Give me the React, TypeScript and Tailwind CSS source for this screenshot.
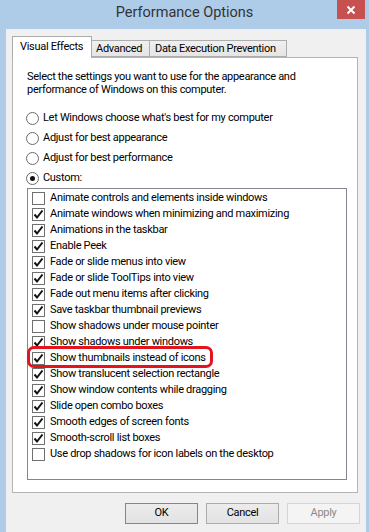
import React from 'react';

type Item = { label: string; checked: boolean };

const items: Item[] = [
  { label: 'Animate controls and elements inside windows', checked: false },
  { label: 'Animate windows when minimizing and maximizing', checked: true },
  { label: 'Animations in the taskbar', checked: true },
  { label: 'Enable Peek', checked: true },
  { label: 'Fade or slide menus into view', checked: true },
  { label: 'Fade or slide ToolTips into view', checked: true },
  { label: 'Fade out menu items after clicking', checked: true },
  { label: 'Save taskbar thumbnail previews', checked: true },
  { label: 'Show shadows under mouse pointer', checked: false },
  { label: 'Show shadows under windows', checked: true },
  { label: 'Show thumbnails instead of icons', checked: true },
  { label: 'Show translucent selection rectangle', checked: true },
  { label: 'Show window contents while dragging', checked: true },
  { label: 'Slide open combo boxes', checked: true },
  { label: 'Smooth edges of screen fonts', checked: true },
  { label: 'Smooth-scroll list boxes', checked: true },
  { label: 'Use drop shadows for icon labels on the desktop', checked: false },
];

const radios = [
  { label: "Let Windows choose what's best for my computer", on: false },
  { label: 'Adjust for best appearance', on: false },
  { label: 'Adjust for best performance', on: false },
  { label: 'Custom:', on: true },
];

const CheckBox: React.FC<{ checked: boolean }> = ({ checked }) => (
  <span className="w-[13px] h-[13px] border border-[#707070] bg-white flex items-center justify-center shrink-0">
    {checked && (
      <svg width="11" height="11" viewBox="0 0 11 11">
        <path d="M1.5 5.5 L4 8.5 L9.5 1.5" fill="none" stroke="#111" strokeWidth="2" />
      </svg>
    )}
  </span>
);

const Radio: React.FC<{ on: boolean }> = ({ on }) => (
  <span className="w-[13px] h-[13px] rounded-full border border-[#6a6a6a] bg-white flex items-center justify-center shrink-0">
    {on && <span className="w-[5px] h-[5px] rounded-full bg-[#111]" />}
  </span>
);

const App: React.FC = () => {
  return (
    <div
      className="relative w-[369px] h-[532px] bg-[#aecbe8] overflow-hidden text-[11px] tracking-[-0.3px] text-black"
      style={{ fontFamily: 'Roboto, "Noto Sans", sans-serif' }}
    >
      {/* title bar */}
      <div className="h-[29px] flex items-center justify-center text-[14.5px] tracking-normal text-[#333] pb-[3px]">
        Performance Options
      </div>
      <div className="absolute top-0 right-[4px] w-[28px] h-[19px] bg-[#c75050] flex items-center justify-center">
        <svg width="10" height="10" viewBox="0 0 10 10">
          <path d="M1.5 1.5 L8.5 8.5 M8.5 1.5 L1.5 8.5" stroke="#fff" strokeWidth="2" />
        </svg>
      </div>

      {/* window body */}
      <div className="ml-[6px] w-[360px] h-[503px] bg-[#f0f0f0] pl-[6px] pt-[7px]">
        {/* tabs */}
        <div className="flex items-end h-[21px] leading-none whitespace-nowrap">
          <div className="relative z-10 w-[80px] h-[22px] -mb-px bg-white border border-b-0 border-[#acacac] flex items-center pl-[7px] pb-[2px]">
            Visual Effects
          </div>
          <div className="w-[58px] h-[17px] bg-gradient-to-b from-[#f0f0f0] to-[#e5e5e5] border border-l-0 border-[#acacac] flex items-center pl-[4px]">
            Advanced
          </div>
          <div className="w-[137px] h-[17px] bg-gradient-to-b from-[#f0f0f0] to-[#e5e5e5] border border-l-0 border-[#acacac] flex items-center pl-[5px]">
            Data Execution Prevention
          </div>
        </div>

        {/* tab panel */}
        <div className="w-[346px] h-[436px] bg-white border border-[#b4b4b4] pl-[13px]">
          <p className="mt-[12px] pl-px leading-[13px] whitespace-nowrap">
            Select the settings you want to use for the appearance and
            <br />
            performance of Windows on this computer.
          </p>

          <div className="mt-[12px]">
            {radios.map((r) => (
              <div key={r.label} className="h-[20px] flex items-center gap-[4px]">
                <Radio on={r.on} />
                <span>{r.label}</span>
              </div>
            ))}
          </div>

          <div className="ml-px w-[320px] h-[292px] border border-[#828790] pt-px pl-[4px]">
            {items.map((it) => (
              <div key={it.label} className="h-[16px] flex items-center gap-[5px] whitespace-nowrap">
                <CheckBox checked={it.checked} />
                <span>{it.label}</span>
              </div>
            ))}
          </div>
        </div>

        {/* buttons */}
        <div className="flex justify-end gap-[8px] mt-[10px] pr-[6px]">
          <button className="w-[73px] h-[21px] border border-[#3399ff] bg-gradient-to-b from-[#ececec] to-[#e2e2e2]">
            OK
          </button>
          <button className="w-[73px] h-[21px] border border-[#acacac] bg-gradient-to-b from-[#ececec] to-[#e2e2e2]">
            Cancel
          </button>
          <button className="w-[73px] h-[21px] border border-[#d5d5d5] bg-[#f4f4f4] text-[#8a8a8a]">
            Apply
          </button>
        </div>
      </div>

      {/* red highlight */}
      <div className="absolute left-[27px] top-[346px] w-[186px] h-[22px] border-[3px] border-[#e3141c] rounded-[7px]" />
    </div>
  );
};

export default App;
